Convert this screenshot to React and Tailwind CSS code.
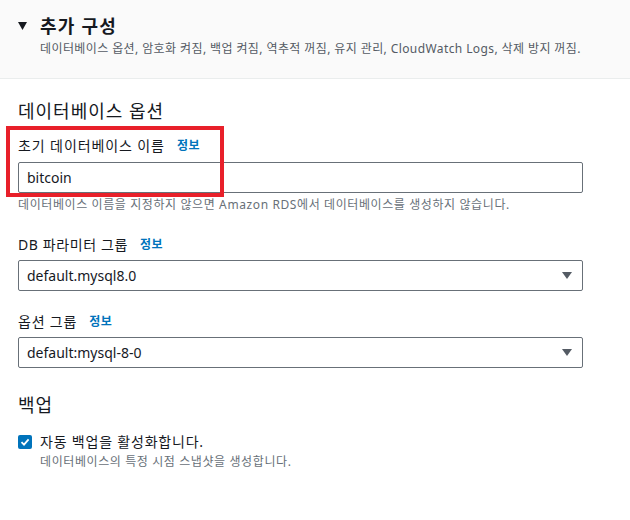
import React from 'react';

const FONT = { fontFamily: '"Noto Sans", "Noto Sans CJK KR", sans-serif' };

const Info = () => (
  <span className="ml-3 text-[12px] font-bold tracking-[0.5px] text-[#0073bb]">정보</span>
);

const Select = ({ value }) => (
  <div className="flex h-[31px] w-[565px] items-center justify-between rounded-[2px] border border-[#687078] bg-white pl-[8px] pr-[10px]">
    <span className="text-[14px] text-[#16191f]">{value}</span>
    <svg width="10" height="7" viewBox="0 0 10 7">
      <path d="M0 0 H10 L5 7 Z" fill="#545b64" />
    </svg>
  </div>
);

export default function App() {
  return (
    <div className="min-h-[520px] bg-white text-[#16191f]" style={FONT}>
      {/* 헤더 */}
      <div className="h-[79px] border-b border-[#eaeded] bg-[#fafafa] pl-[18px] pt-[14px]">
        <div className="flex items-center">
          <svg width="9" height="8" viewBox="0 0 9 8" className="mr-[13px]">
            <path d="M0 0 H9 L4.5 8 Z" fill="#16191f" />
          </svg>
          <span className="text-[18px] font-bold leading-[24px] tracking-[1.2px]">추가 구성</span>
        </div>
        <p className="ml-[22px] mt-[3px] text-[12px] leading-[16px] tracking-[0.4px] text-[#545b64]">
          데이터베이스 옵션, 암호화 켜짐, 백업 켜짐, 역추적 꺼짐, 유지 관리, CloudWatch Logs, 삭제 방지 꺼짐.
        </p>
      </div>

      <div className="px-[18px]">
        <h2 className="mt-[21px] text-[18px] leading-[22px] tracking-[1px]">데이터베이스 옵션</h2>

        <div className="relative mt-[15px]">
          <div className="pointer-events-none absolute left-[-12px] top-[-11px] h-[71px] w-[218px] border-[4px] border-[#e8202a]" />
          <label className="flex items-center text-[14px] leading-[18px] tracking-[0.9px]">
            초기 데이터베이스 이름 <Info />
          </label>
          <div className="mt-[7px] flex h-[31px] w-[565px] items-center rounded-[2px] border border-[#687078] bg-white pl-[8px]">
            <span className="text-[14px]">bitcoin</span>
          </div>
          <p className="mt-[4px] text-[12px] leading-[16px] tracking-[0.6px] text-[#687078]">
            데이터베이스 이름을 지정하지 않으면 Amazon RDS에서 데이터베이스를 생성하지 않습니다.
          </p>
        </div>

        <label className="mt-[23px] flex items-center text-[14px] leading-[18px] tracking-[0.6px]">
          DB 파라미터 그룹 <Info />
        </label>
        <div className="mt-[6px]">
          <Select value="default.mysql8.0" />
        </div>

        <label className="mt-[22px] flex items-center text-[14px] leading-[18px] tracking-[0.8px]">
          옵션 그룹 <Info />
        </label>
        <div className="mt-[6px]">
          <Select value="default:mysql-8-0" />
        </div>

        <h2 className="mt-[26px] text-[18px] leading-[22px] tracking-[1px]">백업</h2>

        <div className="mt-[18px] flex items-start gap-[8px]">
          <div className="mt-[1px] flex h-[14px] w-[14px] items-center justify-center rounded-[2px] bg-[#0073bb]">
            <svg width="10" height="10" viewBox="0 0 10 10">
              <path d="M1.5 5.2 L4 7.6 L8.6 2.4" fill="none" stroke="white" strokeWidth="1.8" />
            </svg>
          </div>
          <div>
            <p className="text-[14px] leading-[16px] tracking-[0.8px]">자동 백업을 활성화합니다.</p>
            <p className="mt-[4px] text-[12px] leading-[16px] tracking-[0.6px] text-[#687078]">
              데이터베이스의 특정 시점 스냅샷을 생성합니다.
            </p>
          </div>
        </div>
      </div>
    </div>
  );
}
